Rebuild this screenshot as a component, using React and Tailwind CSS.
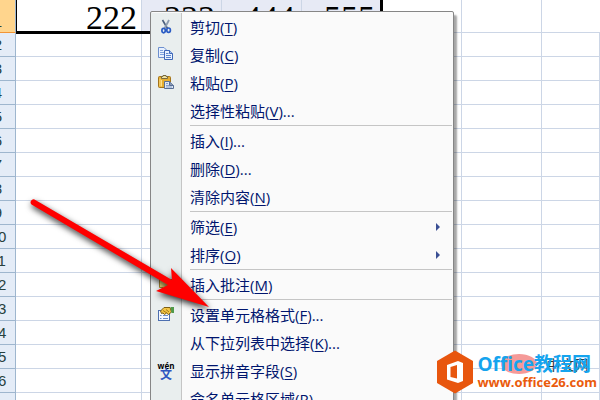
import React from "react";

const menuGroups = [
    [
        { label: "剪切", accel: "T", icon: "cut" },
        { label: "复制", accel: "C", icon: "copy" },
        { label: "粘贴", accel: "P", icon: "paste" },
        { label: "选择性粘贴", accel: "V", dots: true },
    ],
    [
        { label: "插入", accel: "I", dots: true },
        { label: "删除", accel: "D", dots: true },
        { label: "清除内容", accel: "N" },
    ],
    [
        { label: "筛选", accel: "E", submenu: true },
        { label: "排序", accel: "O", submenu: true },
    ],
    [
        { label: "插入批注", accel: "M", icon: "comment" },
    ],
    [
        { label: "设置单元格格式", accel: "F", dots: true, icon: "format" },
        { label: "从下拉列表中选择", accel: "K", dots: true },
        { label: "显示拼音字段", accel: "S", icon: "pinyin" },
        { label: "命名单元格区域", accel: "R", dots: true },
    ],
]

const rows = Array.from({ length: 16 }, (_, i) => i + 2)
const emptyCells = [0, 1, 2, 3, 4, 5, 6]

const icons = {
    cut: (
        <g fill="none">
            <path d="M4.5 1 L9.5 9.5" stroke="#4a5f7d" strokeWidth="1.6" />
            <path d="M11 1 L6.5 9.5" stroke="#8b9bb0" strokeWidth="1.8" />
            <ellipse cx="5.6" cy="11.6" rx="1.7" ry="2.2" stroke="#2a5cc4" strokeWidth="1.7" />
            <ellipse cx="10.6" cy="11.2" rx="1.8" ry="2.2" stroke="#2a5cc4" strokeWidth="1.7" />
        </g>
    ),
    copy: (
        <g strokeWidth="1">
            <path d="M0.5 0.5 H6 L8.5 3 V10.5 H0.5 Z" fill="#e8f1ff" stroke="#6d8fce" />
            <path d="M2 3.5 H5 M2 5.5 H6 M2 7.5 H6" stroke="#7fa3dd" />
            <path d="M6.5 3.5 H11.5 L14.5 6.5 V12.5 H6.5 Z" fill="#e8f1ff" stroke="#3f68b8" />
            <path d="M11.5 3.5 V6.5 H14.5" fill="#a9c3ee" stroke="#3f68b8" />
            <path d="M8 6.5 H10.5 M8 8.5 H13 M8 10.5 H13" stroke="#5c86cf" />
        </g>
    ),
    paste: (
        <g strokeWidth="1">
            <rect x="0.5" y="1.5" width="12" height="11" rx="1" fill="#e5ad2f" stroke="#a3731a" />
            <path d="M2 3.5 V11.5 M3.5 5 V11.5" stroke="#ffe08a" />
            <path d="M3.5 3.5 V1.5 H5 V0.5 H8 V1.5 H9.5 V3.5 Z" fill="#f0e4a4" stroke="#77683e" />
            <path d="M6.5 6.5 H11.5 L15.5 10.5 V13.5 H6.5 Z" fill="#dfe8f5" stroke="#586f96" />
            <path d="M11.5 6.5 V10.5 H15.5" fill="#8899b4" stroke="#586f96" />
            <path d="M8 8.5 H10 M8 10.5 H11 M8 12 H14" stroke="#8aa2cb" />
        </g>
    ),
    comment: (
        <g strokeWidth="1">
            <path d="M1.5 2.5 H14.5 V10.5 H8 L5 13.5 V10.5 H1.5 Z" fill="#efd477" stroke="#a08434" />
        </g>
    ),
    format: (
        <g strokeWidth="1">
            <rect x="0.5" y="3.5" width="11" height="10" fill="#f4f8ff" stroke="#4d6fb0" />
            <path d="M2 8.5 H3.5 M5 8.5 H10 M2 11.5 H3.5 M5 11.5 H10" stroke="#6d8ec9" />
            <path d="M2.5 4 L6 0.5 H12 L13.5 5 L10.5 7.5 L8.5 6 L6.5 7.5 L5 6 L3.5 6.5 Z" fill="#f3c544" stroke="#7d5f14" />
            <path d="M5 3.5 L9 6 M8 2.5 L11 5" stroke="#a37a18" />
            <path d="M12.5 0 H16 V6 H13.5 Z" fill="#4f9a4a" />
        </g>
    ),
}

const MenuIcon = ({ name }) => {
    if (!name) {
        return null
    }
    if (name === "pinyin") {
        return (
            <span className="flex flex-col items-center">
                <span className="text-[8px] leading-[8px] font-bold text-black">wén</span>
                <span className="text-[12px] leading-[10px] font-bold text-[#2f55c0]">文</span>
            </span>
        )
    }
    return (
        <svg viewBox="0 0 16 16" className="size-4" aria-hidden="true">{icons[name]}</svg>
    )
}

const MenuItem = ({ item }) => (
    <li>
        <button className="flex h-7 w-full items-center text-left text-[15px] leading-7 whitespace-nowrap text-[#00156e]">
            <span className="flex w-[30px] shrink-0 justify-center">
                <MenuIcon name={item.icon} />
            </span>
            <span className="grow pl-[9px]">
                {item.label}(<span className="underline underline-offset-2">{item.accel}</span>){item.dots && "..."}
            </span>
            {
                item.submenu &&
                <svg viewBox="0 0 4 8" className="mr-3 h-2 w-1" aria-hidden="true">
                    <path d="M0 0 L4 4 L0 8 Z" fill="#3a4f94" />
                </svg>
            }
        </button>
    </li>
)

const ContextMenu = () => (
    <div className="absolute top-[11px] left-[150px] w-[304px] rounded-xs border border-[#868686] bg-[#fafafa] p-px pl-0 shadow-[3px_4px_2px_rgba(0,0,0,0.35)]">
        <div className="bg-[linear-gradient(to_right,#e9eeee_30px,#c5c5c5_30px,#c5c5c5_31px,#fafafa_31px)]">
            {menuGroups.map((group, i) => (
                <div key={i}>
                    {i > 0 && <div className="ml-[39px] h-0.5 border-t border-[#c5c5c5]"></div>}
                    <ul>
                        {group.map((item) => <MenuItem key={item.accel} item={item} />)}
                    </ul>
                </div>
            ))}
        </div>
    </div>
)

const RowHeader = ({ number, active }) => (
    <th className={"overflow-hidden border-r border-b p-0 font-normal" + (active ? " border-r-[#9eb6ce] border-b-[#f29536] bg-[#ffd58d] align-bottom" : " border-[#9eb6ce] bg-[#e4ecf7]")}>
        <span className="flex justify-end">
            <span className="w-[34px] shrink-0 text-center font-['Liberation_Sans',sans-serif] text-[15px] leading-5 text-[#27413e]">{number}</span>
        </span>
    </th>
)

const Sheet = () => (
    <table className="w-full table-fixed border-separate border-spacing-0">
        <colgroup>
            <col className="w-4" />
            <col className="w-[126px]" />
            <col className="w-20" />
            <col className="w-20" />
            <col className="w-20" />
            <col className="w-20" />
            <col className="w-20" />
            <col />
        </colgroup>
        <tbody>
            <tr className="h-[33px] text-right font-['Liberation_Serif',serif] text-[34px] leading-7 text-black">
                <RowHeader number={1} active />
                <td className="relative border-r border-b border-[#ccd6e6] p-0 pt-1 pr-1">
                    222
                    <div className="absolute top-0 -bottom-0.5 left-0 w-[367px] border-r-3 border-b-3 border-l border-black"></div>
                </td>
                {["333", "444", "555"].map((value) => (
                    <td key={value} className="border-r border-b border-[#ccd6e6] bg-[#e7eaf5] p-0 pt-1 pr-1.5">{value}</td>
                ))}
                <td className="border-r border-b border-[#ccd6e6]"></td>
                <td className="border-r border-b border-[#ccd6e6]"></td>
                <td className="border-b border-[#ccd6e6]"></td>
            </tr>
            {rows.map((number) => (
                <tr key={number} className="h-6">
                    <RowHeader number={number} />
                    {emptyCells.map((cell) => <td key={cell} className="border-r border-b border-[#ccd6e6] p-0"></td>)}
                </tr>
            ))}
        </tbody>
    </table>
)

const Arrow = () => (
    <svg viewBox="0 0 200 130" className="pointer-events-none absolute top-[190px] left-5 h-[130px] w-[200px] overflow-visible drop-shadow-[1px_3px_3px_rgba(0,0,0,0.8)]" aria-hidden="true">
        <path d="M14.5 9.5 L152 90 L151 78 L189 117 L136 101 L148 95 L11.5 14.5 A3 3 0 0 1 14.5 9.5 Z" fill="#fe0000" />
    </svg>
)

const Watermark = () => (
    <div className="absolute right-[3px] bottom-1.5 flex items-center gap-1 whitespace-nowrap">
        <svg viewBox="0 0 36 44" className="h-11 w-9 shrink-0" aria-hidden="true">
            <path d="M18 0.5 L36 11 V33 L18 43.5 L0 33 V11 Z" fill="#e8560e" />
            <path d="M10 15 L21 11 L26 13 V31 L21 33 L10 29.5 Z M13.5 17 V27 L20 28.5 V15 Z" fill="#fff" fillRule="evenodd" />
        </svg>
        <div className="relative">
            <div className="absolute top-0 left-6 h-5 w-9 rounded-[50%] bg-[#f59a98]"></div>
            <div className="absolute top-0 left-[69px] font-['Noto_Sans_CJK_SC',sans-serif] text-[14px] leading-5 text-[#333]">中文网</div>
            <div className="relative text-[19px] leading-5 font-bold text-[#15a4ee]">Office教程网</div>
            <div className="relative text-[13px] leading-4 font-bold text-[#ea5b0c]">www.office26.com</div>
        </div>
    </div>
)

const App = () => {
    return (
        <div className="relative h-screen overflow-hidden bg-white font-['Open_Sans','Noto_Sans_CJK_SC',sans-serif]">
            <Sheet />
            <ContextMenu />
            <Arrow />
            <Watermark />
        </div>
    )
}

export default App
